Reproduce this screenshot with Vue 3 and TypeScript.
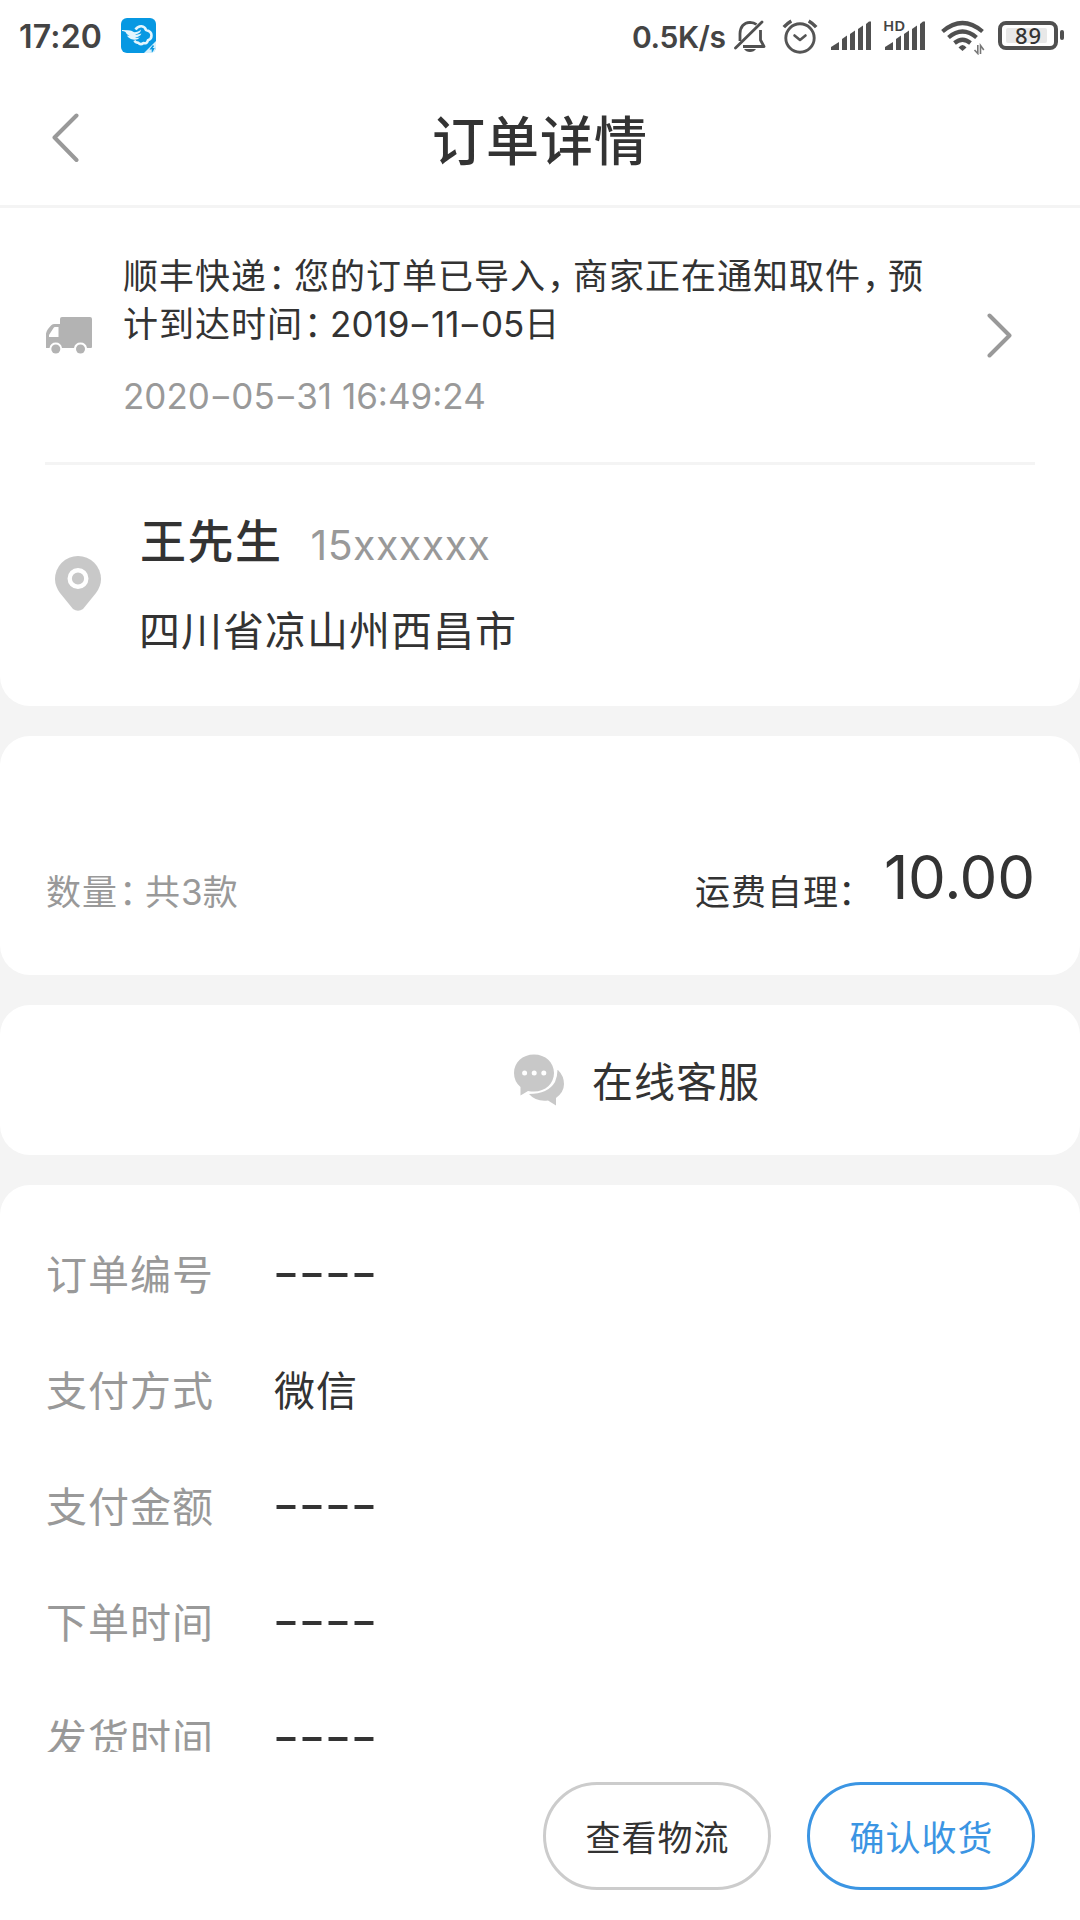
<script setup lang="ts">
interface Row {
  label: string
  value: string
}

const rows: Row[] = [
  { label: '订单编号', value: '----' },
  { label: '支付方式', value: '微信' },
  { label: '支付金额', value: '----' },
  { label: '下单时间', value: '----' },
  { label: '发货时间', value: '----' },
]

const bars = [
  'M0 30V27L8 22V30Z',
  'M11 30V19L16 15.5V30Z',
  'M19 30V14L24 10.5V30Z',
  'M27 30V9L32 5.5V30Z',
  'M35 30V4L38 1.5H40V30Z',
]
</script>

<template>
  <div class="screen">
    <div class="status">
      <span class="clock">17:20</span>
      <svg class="app" width="35" height="35" viewBox="0 0 35 35">
        <rect width="35" height="35" rx="6" fill="#0798e2" />
        <path d="M35 23V29Q35 35 29 35H23Z" fill="#d9f1fc" />
        <path d="M32.5 27.5l-2.500 3.200h2.500l-1.500 3" fill="none" stroke="#0798e2" stroke-width="1.500" />
        <path
          d="M14.5 11.5Q17 8 20.5 8.3Q24 8.700 25 12Q30.500 13.200 30.500 17.500Q30.500 21 27 22.200Q26 26 22.500 25Q19.500 27.500 17 24.500Q14.500 25 13.500 22.500"
          fill="none" stroke="#e4f5fd" stroke-width="2.6" stroke-linejoin="round"
        />
        <path d="M1 12Q8 12 11 13Q12.500 15 17 13.500Q19.500 12.500 20 11.500Q20 15.500 14 16.500Q17 17 20.500 15.500Q18.500 19.500 14 19.300Q16 20.300 19 19.500Q16 22.500 12 21.500Q7.500 20.500 6 17.500L8.500 18Q5 16 4.500 14Q3 13 1 13Z" fill="#e4f5fd" />
      </svg>
      <span class="speed">0.5K/s</span>
      <svg class="bell" width="32" height="33" viewBox="0 0 32 33" fill="none" stroke="#505050" stroke-width="2.8">
        <path d="M6 21V13.500Q6.500 3 16 2.300Q20 2.300 22.500 4.500" />
        <path d="M26.500 10V20L30 26.500H9" stroke-linejoin="round" />
        <path d="M1.500 28L28 2" stroke-linecap="round" />
        <path d="M10 29H22Q20 32 16 32Q12 32 10 29Z" fill="#505050" stroke="none" />
      </svg>
      <svg class="alarm" width="36" height="35" viewBox="0 0 36 35" fill="none" stroke="#555" stroke-width="2.900" stroke-linecap="round">
        <circle cx="18" cy="19" r="14.200" />
        <path d="M12.500 16.500L18 21L23.500 16.500" stroke-linejoin="round" stroke-width="2.600" />
        <path d="M1.800 8.200Q5 4.500 9.300 2M34.200 8.200Q31 4.500 26.700 2" stroke-linecap="butt" stroke-width="3.400" />
      </svg>
      <svg class="signal" width="40" height="30" viewBox="0 0 40 30" fill="#505050">
        <path v-for="b in bars" :key="b" :d="b" />
      </svg>
      <div class="hd-signal">
        <svg width="40" height="30" viewBox="0 0 40 30" fill="#505050">
          <path v-for="b in bars" :key="b" :d="b" />
        </svg>
        <span class="hd">HD</span>
      </div>
      <svg class="wifi" width="44" height="35" viewBox="0 0 44 35" fill="none" stroke="#505050" stroke-width="4.200">
        <path d="M1.500 11.500Q21.500 -5.500 41.500 11.500" />
        <path d="M7.500 17.500Q21.500 5.500 35.500 17.500" />
        <path d="M13.500 23Q21.500 16.500 29.500 23" />
        <path d="M17.500 27.500Q21.500 22.500 25.500 27.500L21.500 31Z" fill="#505050" stroke="none" />
        <path d="M36.800 25V33.500L33.500 30M39.500 34V25.500L42.800 30" stroke-width="1.600" stroke="#777" />
      </svg>
      <div class="battery"><span>89</span></div>
      <i class="nub"></i>
    </div>

    <header class="header">
      <svg class="back" width="27" height="50" viewBox="0 0 27 50">
        <path d="M24.500 2.500L2.500 24.500L24.500 47" fill="none" stroke="#999" stroke-width="4" stroke-linecap="round" stroke-linejoin="round" />
      </svg>
      <h1>订单详情</h1>
    </header>

    <main class="content">
      <section class="card first">
        <div class="delivery">
          <svg class="truck" width="46" height="38" viewBox="0 0 46 38">
            <path d="M0 31V16.500Q0.500 14 2 12L5 8.500Q6 7 8 7H14V2Q14 0 16 0H44Q46 0 46 2V30Q46 31 45 31H41Q40 25.500 34.500 25.500Q29 25.500 28 31H16Q15 25.500 9.800 25.500Q4.500 25.500 3.500 31Z" fill="#b3b3b3" />
            <path d="M3 20V18L7.500 11Q8 10 9 10H12.500V20Z" fill="#fff" />
            <circle cx="9.800" cy="32" r="4.500" fill="#b3b3b3" />
            <circle cx="34.500" cy="32" r="4.500" fill="#b3b3b3" />
          </svg>
          <div class="delivery-text">
            <p>顺丰快递<span class="pc">：</span>您的订单已导入<span class="pc">，</span>商家正在通知取件<span class="pc">，</span>预</p>
            <p>计到达时间<span class="pc">：</span><span class="num">2019<b class="dash">-</b>11<b class="dash">-</b>05</span>日</p>
            <p class="time num">2020<b class="dash">-</b>05<b class="dash">-</b>31 16:49:24</p>
          </div>
          <svg class="arrow" width="26" height="45" viewBox="0 0 26 45">
            <path d="M2.500 2.500L22.500 22.500L2.500 42.500" fill="none" stroke="#999" stroke-width="4" stroke-linecap="round" stroke-linejoin="round" />
          </svg>
        </div>
        <div class="address">
          <svg class="pin" width="46" height="55" viewBox="0 0 46 55">
            <path d="M23 0A23 23 0 0 1 46 23Q46 30 41 37L28 53Q23 56.500 18 53L5 37Q0 30 0 23A23 23 0 0 1 23 0Z" fill="#c8c8c8" />
            <circle cx="23" cy="22.500" r="8.300" fill="#c8c8c8" stroke="#fff" stroke-width="4.400" />
          </svg>
          <div>
            <div class="person"><strong>王先生</strong><span class="phone">15xxxxxx</span></div>
            <p class="place">四川省凉山州西昌市</p>
          </div>
        </div>
      </section>

      <section class="card summary">
        <span class="count">数量<span class="pc">：</span>共<span class="num">3</span>款</span>
        <span class="fee">运费自理<span class="pc">：</span></span>
        <span class="amount">10.00</span>
      </section>

      <section class="card service">
        <svg width="50" height="52" viewBox="0 0 50 52">
          <path d="M44 16Q50 22 50 30Q50 38 42 44V51.500L34 46.500Q22 48 15 40Q34 40 41 28Q43.500 22 43.500 16Z" fill="#c8c8c8" />
          <path d="M20 0.500C31.500 0.500 40 8.500 40 19C40 29.500 31.500 37.500 20 37.500Q17 37.500 14 37L6.500 41.500V33Q0 27.500 0 19C0 8.500 8.500 0.500 20 0.500Z" fill="#c8c8c8" />
          <circle cx="10.600" cy="19" r="2.500" fill="#fff" />
          <circle cx="20.200" cy="19" r="2.500" fill="#fff" />
          <circle cx="29.800" cy="19" r="2.500" fill="#fff" />
        </svg>
        <span>在线客服</span>
      </section>

      <section class="card details">
        <div v-for="row in rows" :key="row.label" class="row">
          <span class="label">{{ row.label }}</span>
          <span :class="row.value === '----' ? 'blank' : 'value'">{{ row.value }}</span>
        </div>
      </section>
    </main>

    <footer class="actions">
      <button type="button">查看物流</button>
      <button type="button" class="primary">确认收货</button>
    </footer>
  </div>
</template>

<style>
body {
  margin: 0;
}
</style>

<style scoped>
.screen {
  width: 1080px;
  height: 1920px;
  display: flex;
  flex-direction: column;
  overflow: hidden;
  background: #fff;
  color: #333;
  font-family: Inter, "Noto Sans CJK SC", sans-serif;
  font-size: 35px;
  letter-spacing: 1px;
}
svg {
  display: block;
  flex: none;
}
p, h1 {
  margin: 0;
}
.status {
  box-sizing: border-box;
  height: 75px;
  flex: none;
  display: flex;
  align-items: flex-start;
  padding: 18px 0 0 19px;
  color: #444;
  white-space: nowrap;
}
.clock {
  width: 102px;
  font: 600 32px/38px Inter, sans-serif;
  letter-spacing: 0.2px;
}
.speed {
  width: 101px;
  margin-left: 476px;
  font: 600 30px/38px Inter, sans-serif;
  letter-spacing: -0.4px;
}
.bell {
  margin: 2px 0 0 1px;
}
.alarm {
  margin: 1px 0 0 16px;
}
.signal {
  margin: 2px 0 0 13px;
}
.hd-signal {
  position: relative;
  margin: 2px 0 0 14px;
}
.hd {
  position: absolute;
  left: -2px;
  top: -2px;
  font: 600 15px/15px "Noto Sans", sans-serif;
  letter-spacing: 0;
}
.wifi {
  margin: 2px 0 0 16px;
}
.battery {
  box-sizing: border-box;
  width: 60px;
  height: 29px;
  flex: none;
  margin: 3px 0 0 13px;
  border: 4px solid #505050;
  border-radius: 8px;
  padding: 3px 7px 3px 4px;
  display: flex;
}
.battery span {
  flex: 1;
  background: #e8e8e8;
  border-radius: 2px;
  text-align: center;
  font: 500 22px/14px "Noto Sans", sans-serif;
  letter-spacing: 1px;
  padding-left: 4px;
  color: #333;
}
.nub {
  width: 4px;
  height: 10px;
  margin: 12px 0 0 2px;
  border-radius: 2px;
  background: #505050;
}
.header {
  height: 130px;
  flex: none;
  position: relative;
  display: flex;
  align-items: center;
  justify-content: center;
  border-bottom: 3px solid #f4f4f4;
}
.header h1 {
  margin-top: 4px;
  font-size: 53px;
  line-height: 60px;
  font-weight: 500;
}
.back {
  position: absolute;
  left: 52px;
  top: 38px;
}
.content {
  height: 1544px;
  flex: none;
  overflow: hidden;
  display: flex;
  flex-direction: column;
  gap: 30px;
  background: #f4f4f4;
}
.card {
  box-sizing: border-box;
  flex: none;
  border-radius: 30px;
  background: #fff;
}
.first {
  height: 498px;
  padding: 0 45px;
  border-radius: 0 0 30px 30px;
}
.delivery {
  box-sizing: border-box;
  height: 257px;
  padding: 44px 0 0 1px;
  display: flex;
  border-bottom: 3px solid #f4f4f4;
}
.truck {
  margin-top: 65px;
}
.delivery-text {
  width: 841px;
  margin-left: 31px;
  line-height: 48px;
  white-space: nowrap;
}
.pc {
  padding-left: 1px;
  letter-spacing: -9px;
}
.num {
  letter-spacing: 0;
}
.dash {
  display: inline-block;
  width: 21.500px;
  text-align: center;
  font: 400 36px/36px "DejaVu Sans", sans-serif;
  letter-spacing: 0;
  transform: translateY(-2px) scaleX(1.7);
}
.delivery-text .time {
  margin-top: 24px;
  color: #999;
}
.arrow {
  margin: 61px 0 0 23px;
}
.address {
  display: flex;
  padding: 46px 0 0 10px;
}
.pin {
  margin: 45px 38px 0 0;
}
.person {
  display: flex;
  line-height: 60px;
}
.person strong {
  margin-left: 1px;
  font-size: 46px;
  font-weight: 500;
  letter-spacing: 1.500px;
}
.phone {
  margin: 4px 0 -4px 28px;
  font-size: 41px;
  letter-spacing: 0.500px;
  color: #999;
}
.place {
  margin-top: 30px;
  font-size: 41px;
  line-height: 60px;
}
.summary {
  height: 239px;
  padding: 116px 46px 0 46px;
  display: flex;
  line-height: 80px;
}
.count {
  color: #999;
}
.fee {
  margin-left: auto;
}
.fee .pc {
  padding-left: 0;
  margin-left: -1px;
  letter-spacing: -7px;
}
.amount {
  box-sizing: border-box;
  width: 150px;
  margin-left: 18px;
  font-size: 60px;
  line-height: 50px;
  letter-spacing: -0.300px;
  text-align: right;
}
.service {
  height: 150px;
  display: flex;
  padding: 49px 0 0 514px;
  font-size: 41px;
  line-height: 56px;
}
.service span {
  margin-left: 28px;
}
.details {
  height: 700px;
  padding: 60px 46px 0;
}
.row {
  height: 116px;
  display: flex;
  font-size: 41px;
  line-height: 60px;
}
.label {
  width: 228px;
  color: #999;
}
.blank {
  margin-left: -1px;
  font-family: "DejaVu Sans", sans-serif;
  font-size: 50px;
  line-height: 55px;
  letter-spacing: 0;
  transform: scaleX(1.44);
  transform-origin: 0 50%;
}
.actions {
  display: flex;
  justify-content: flex-end;
  gap: 36px;
  padding: 30px 45px 0 0;
}
.actions button {
  box-sizing: border-box;
  width: 228px;
  height: 108px;
  padding: 4px 0 0 1px;
  border: 3px solid #ccc;
  border-radius: 54px;
  background: #fff;
  color: #333;
  font: 400 35px/48px Inter, "Noto Sans CJK SC", sans-serif;
  letter-spacing: 1px;
}
.actions .primary {
  border-color: #3b95e3;
  color: #3b95e3;
}
</style>
